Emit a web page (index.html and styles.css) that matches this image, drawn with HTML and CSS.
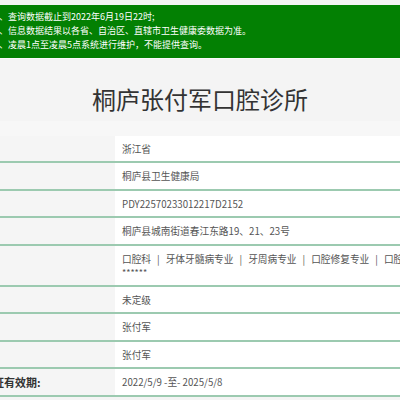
FILE: index.html
```html
<!DOCTYPE html>
<html lang="zh-CN">
<head>
<meta charset="utf-8">
<link rel="stylesheet" href="styles.css">
</head>
<body>
<div class="page">
  <div class="notice">
    <p>1、查询数据截止到2022年6月19日22时;</p>
    <p>2、信息数据结果以各省、自治区、直辖市卫生健康委数据为准。</p>
    <p>3、凌晨1点至凌晨5点系统进行维护，不能提供查询。</p>
  </div>
  <h1 class="title">桐庐张付军口腔诊所</h1>
  <div class="panel">
    <div class="info">
      <div class="row"><div class="label">省份:</div><div class="value">浙江省</div></div>
      <div class="row"><div class="label">登记机关:</div><div class="value">桐庐县卫生健康局</div></div>
      <div class="row"><div class="label">登记号:</div><div class="value">PDY22570233012217D2152</div></div>
      <div class="row"><div class="label">地址:</div><div class="value">桐庐县城南街道春江东路19、21、23号</div></div>
      <div class="row"><div class="label">诊疗科目:</div><div class="value"><div class="line">口腔科<span class="sep">|</span>牙体牙髓病专业<span class="sep">|</span>牙周病专业<span class="sep">|</span>口腔修复专业<span class="sep">|</span>口腔正畸专业</div><div class="stars">******</div></div></div>
      <div class="row"><div class="label">等级:</div><div class="value">未定级</div></div>
      <div class="row"><div class="label">法人:</div><div class="value">张付军</div></div>
      <div class="row"><div class="label">负责人:</div><div class="value">张付军</div></div>
      <div class="row"><div class="label">执业许可证有效期:</div><div class="value">2022/5/9 -至- 2025/5/8</div></div>
    </div>
  </div>
</div>
</body>
</html>
```
FILE: styles.css
```css
html, body {
  margin: 0;
  padding: 0;
  background: #f4f4f4;
  overflow: hidden;
  width: 400px;
  height: 400px;
}
body {
  font-family: "Noto Sans CJK SC", "Microsoft YaHei", sans-serif;
}
.page {
  margin-left: -51px;
  width: 502px;
  padding-top: 5px;
}
.notice {
  background: #038003;
  color: #ffffff;
  padding: 5px 0 6px 45px;
  border-bottom: 1px solid #fbfbfb;
}
.notice p {
  margin: 0;
  font-size: 9px;
  line-height: 14px;
  white-space: nowrap;
}
.title {
  margin: 0;
  padding: 24px 0 6px;
  text-align: center;
  font-size: 24px;
  line-height: 32px;
  font-weight: normal;
  color: #333333;
}
.panel {
  background: #f7f7f7;
  padding-top: 15px;
}
.info {
  display: flex;
  flex-direction: column;
}
.row {
  display: flex;
  border-bottom: 2px solid #9ccab0;
}
.label {
  width: 166px;
  flex: none;
  background: #f5f5f5;
  font-size: 11px;
  font-weight: bold;
  color: #333333;
  line-height: 14px;
  padding: 6px 0 5.4px;
  white-space: nowrap;
}
.value {
  flex: 1;
  background: #ffffff;
  padding: 6px 0 5.4px 7px;
  font-size: 9.7px;
  line-height: 14px;
  color: #555555;
  white-space: nowrap;
}
.sep {
  margin: 0 6px;
}
.stars {
  font-size: 9px;
}
```
